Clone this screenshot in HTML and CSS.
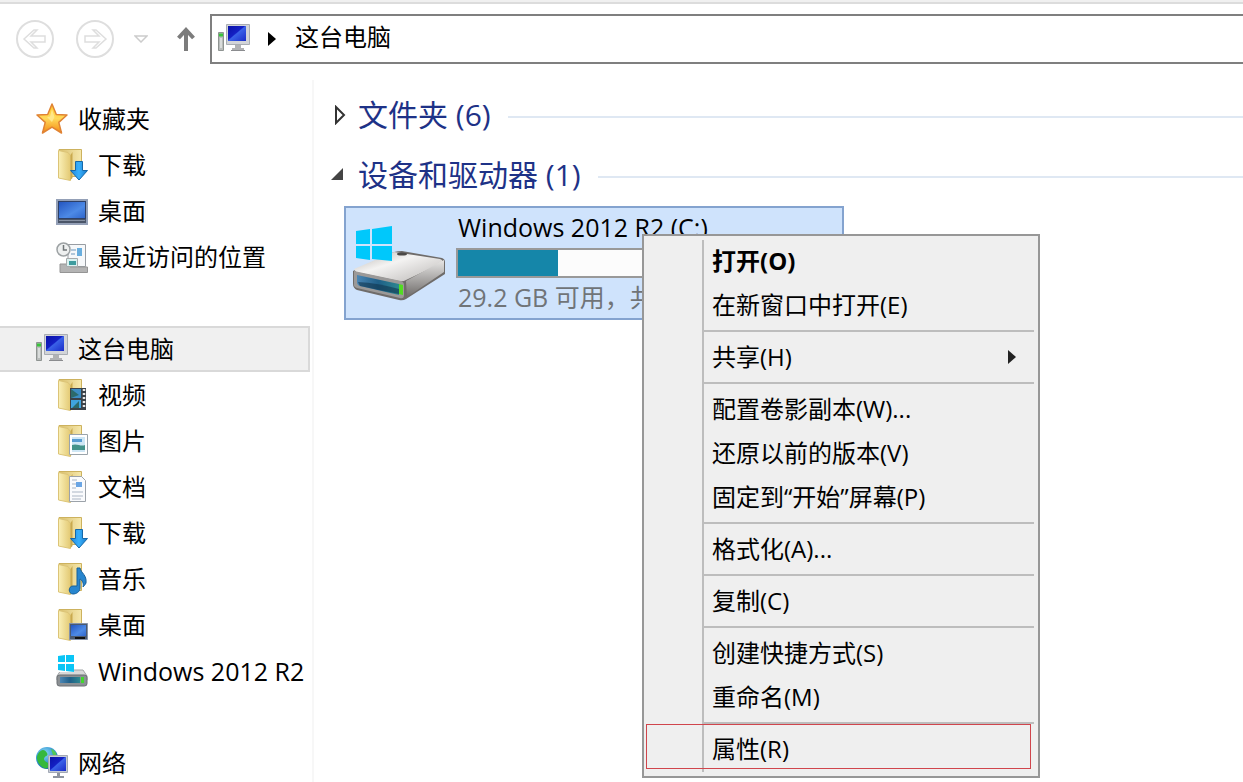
FILE: index.html
```
<!DOCTYPE html>
<html lang="zh-CN">
<head>
<meta charset="utf-8">
<title>这台电脑</title>
<link rel="stylesheet" href="styles.css">
</head>
<body>
<svg class="defs" aria-hidden="true">
  <defs>
    <linearGradient id="gFolder" x1="0" x2="1" y1="0" y2="0"><stop offset="0" stop-color="#faf0b8"/><stop offset="1" stop-color="#e3c973"/></linearGradient>
    <linearGradient id="gBack" x1="0" x2="1"><stop offset="0" stop-color="#d9bf6c"/><stop offset="1" stop-color="#f6e8ac"/></linearGradient>
    <linearGradient id="gScreen" x1="0" x2="1" y1="0" y2="1"><stop offset="0" stop-color="#0a12a8"/><stop offset=".45" stop-color="#1420c4"/><stop offset=".5" stop-color="#3a62e8"/><stop offset="1" stop-color="#1a2cc8"/></linearGradient>
    <linearGradient id="gDesk" x1="0" x2="1" y1="0" y2="1"><stop offset="0" stop-color="#2456c0"/><stop offset=".6" stop-color="#4d8ae6"/><stop offset="1" stop-color="#2f66cc"/></linearGradient>
    <linearGradient id="gStar" x1="0" x2="0" y1="0" y2="1"><stop offset="0" stop-color="#ffc928"/><stop offset=".5" stop-color="#ffd95a"/><stop offset="1" stop-color="#f58a12"/></linearGradient>
    <linearGradient id="gArrow" x1="0" x2="1"><stop offset="0" stop-color="#1d86dd"/><stop offset=".5" stop-color="#39b0fb"/><stop offset="1" stop-color="#1577c9"/></linearGradient>
    <linearGradient id="gTop" x1="0" x2="1" y1="0" y2="1"><stop offset="0" stop-color="#b5b1ae"/><stop offset=".4" stop-color="#f4f3f2"/><stop offset="1" stop-color="#b9b6b4"/></linearGradient>
    <linearGradient id="gSide" x1="0" x2="0" y1="0" y2="1"><stop offset="0" stop-color="#e8e7e6"/><stop offset="1" stop-color="#6e6b69"/></linearGradient>
    <linearGradient id="gFace" x1="0" x2="1"><stop offset="0" stop-color="#4b86b4"/><stop offset=".5" stop-color="#1f5f88"/><stop offset="1" stop-color="#2d8790"/></linearGradient>
    <radialGradient id="gGlobe" cx=".4" cy=".3" r=".8"><stop offset="0" stop-color="#8fdcf4"/><stop offset=".6" stop-color="#2a8ed0"/><stop offset="1" stop-color="#12509c"/></radialGradient>
    <symbol id="folder" viewBox="0 0 32 32">
      <path d="M3 .5h22.500v27H14z" fill="url(#gBack)" stroke="#cdb25e"/>
      <path d="M2.500 1.500L12 3.500l2.500 3v25L2.500 29z" fill="url(#gFolder)" stroke="#dcc477"/>
      <path d="M14.500 6l2-3v26l-2 2z" fill="#c9a94e"/>
    </symbol>
    <symbol id="pc" viewBox="0 0 32 32">
      <path d="M.5 9.500h5v18h-5z" fill="#b9bcbb" stroke="#8f9492"/><path d="M1 10.500h4v3H1z" fill="#39c43a"/><path d="M2 15h2v10H2z" fill="#d9dcdb"/>
      <path d="M8.500 1.500h23v20h-23z" fill="#d2d4d8" stroke="#a9adb3"/>
      <path d="M10 3h18v15H10z" fill="url(#gScreen)"/>
      <path d="M17 22h6v3h3v3H14v-3h3z" fill="#b1b2b4"/><path d="M13 27h14v1H13z" fill="#8b8c8f"/>
    </symbol>
    <symbol id="star" viewBox="0 0 32 32"><path d="M16 1l4.300 10.500L31 12l-8.200 7.400L25.500 30 16 24.200 6.500 30l2.700-10.600L1 12l10.700-.5z" fill="url(#gStar)" stroke="#e08334" stroke-width="1.500" stroke-linejoin="round"/><path d="M16 6l2.500 8L16 19l-5-5 3-.5z" fill="#ffe789"/></symbol>
    <symbol id="dl" viewBox="0 0 32 32"><use href="#folder"/><path d="M19.500 12.500h7v9h5l-8.500 9.500-8.500-9.500h5z" fill="url(#gArrow)" stroke="#1668a8"/></symbol>
    <symbol id="desk" viewBox="0 0 32 32"><path d="M1 5h30v24H1z" fill="#2e4066" stroke="#94a0b7" stroke-width="2"/><path d="M3 7h26v16H3z" fill="url(#gDesk)"/><path d="M2 24h28v4H2z" fill="#4a5568"/><path d="M3 25h26v1H3z" fill="#8691a3"/></symbol>
    <symbol id="recent" viewBox="0 0 32 32">
      <path d="M12 3.500h17.500v22H12z" fill="#f6f8fa" stroke="#989da3"/><path d="M15 8h5v2h-5zM15 12h4v2h-4z" fill="#b1c7da"/><path d="M21 7h5v8h-5z" fill="#69aede"/>
      <path d="M4 23h8l2 3h17.500v5.500H4z" fill="#b4b4b4" stroke="#959595"/><path d="M10.500 17.500h11v8h-11z" fill="#d9f2f1" stroke="#a7aaac"/><path d="M13 20h7v4h-7z" fill="#3e9c9f"/>
      <circle cx="7.500" cy="8.500" r="6.500" fill="#eef0f0" stroke="#9da2a4" stroke-width="1.500"/><path d="M7.500 4v5H11" fill="none" stroke="#717678" stroke-width="1.500"/>
    </symbol>
    <symbol id="video" viewBox="0 0 32 32"><use href="#folder"/><path d="M14 9h16v22H14z" fill="#3b4248"/><path d="M15 10h10v9H15z" fill="#3c8dc4"/><path d="M15 21h10v8H15z" fill="#3fa4df"/><path d="M15 10l8 6-8 3zM16 29l7-7v7z" fill="#2c6a6b"/><path d="M28 10v20" stroke="#e6e6e6" stroke-width="2.500" stroke-dasharray="2 2"/></symbol>
    <symbol id="pic" viewBox="0 0 32 32"><use href="#folder"/><path d="M13.500 9.500h18v20h-18z" fill="#fff" stroke="#9aa4ab"/><path d="M16 12h13v15H16z" fill="#cfe7f5"/><path d="M16 14h10v3H16z" fill="#579cd1"/><path d="M16 20c5-2 9 2 13 0v5H16z" fill="#44938a"/></symbol>
    <symbol id="doc" viewBox="0 0 32 32"><use href="#folder"/><path d="M13.500 5.500h12l4 4v21h-16z" fill="#fafbfd" stroke="#9ca2a9"/><path d="M16 9h5M16 13h4M16 17h4M16 21h11M16 25h11M16 28h9" stroke="#abb6c5"/><path d="M20 11h6v5h-6z" fill="#6aa5e4"/></symbol>
    <symbol id="music" viewBox="0 0 32 32"><use href="#folder"/><path d="M21 5h3c1 5 7 7 6 15-1 2-2 3-3 4 1-4-1-7-3-8v9c0 4-4 6-7 6-5 0-5-8 0-8h4z" fill="#2785ce" stroke="#176099"/></symbol>
    <symbol id="fdesk" viewBox="0 0 32 32"><use href="#folder"/><path d="M13.500 14.500h18v16h-18z" fill="#4b5a70" stroke="#8592a8"/><path d="M15 16h15v11H15z" fill="url(#gDesk)"/><path d="M19 28h10v2H19z" fill="#111"/></symbol>
    <symbol id="drive" viewBox="0 0 32 32"><path d="M5 15h22l4 6v4H1v-4z" fill="#d8d9da" stroke="#a1a4a6"/><rect x="1" y="20" width="30" height="11" rx="2.500" fill="#8b9094" stroke="#6b6f73"/><path d="M4 22h20v6H4z" fill="url(#gFace)"/><path d="M25 22h3v6h-3z" fill="#42d62f"/><path d="M2 0h16v17H2z" fill="#fff"/><path d="M2 1l7-1v7H2zM10 0h8v7h-8zM2 9h7v7l-7-1zM10 9h8v8l-8-1z" fill="#0ac5f6"/></symbol>
    <symbol id="net" viewBox="0 0 32 32"><circle cx="11" cy="11" r="11" fill="url(#gGlobe)"/><path d="M2 7C6 1 9 3 11 6s-3 3-3 6 5 3 5 6-3 4-5 3C3 19-1 12 2 7z" fill="#35b83c"/><path d="M15 2c4 1 6 5 6 8l-4-2z" fill="#54c855"/><path d="M12.500 8.500h19v17h-19z" fill="#c6cbd5" stroke="#a3a9b5"/><path d="M14 10h16v14H14z" fill="url(#gScreen)"/><path d="M21 26h3v3h4v2H17v-2h4z" fill="#8e949f"/></symbol>
  </defs>
</svg>
<header class="toolbar">
  <button class="nav" aria-label="后退"><svg class="round" viewBox="0 0 40 40"><circle cx="20" cy="20" r="18"/><path d="M9 20l10-9h3l-6 6h14v6H16l6 6h-3z"/></svg></button>
  <button class="nav" aria-label="前进"><svg class="round" viewBox="0 0 40 40"><circle cx="20" cy="20" r="18"/><path d="M31 20l-10-9h-3l6 6H10v6h14l-6 6h3z"/></svg></button>
  <button class="nav history" aria-label="最近浏览的位置"><svg class="chev" viewBox="0 0 14 8"><path d="M1 1h12L7 7z"/></svg></button>
  <button class="nav up" aria-label="上移"><svg class="uparrow" viewBox="0 0 18 24"><path d="M9 24V3M1.500 11L9 3l7.500 8"/></svg></button>
  <nav class="address" aria-label="地址">
    <svg class="icon"><use href="#pc"/></svg>
    <svg class="crumb-arrow" viewBox="0 0 8 14"><path d="M0 0l8 7-8 7z"/></svg>
    <a href="#pc-root">这台电脑</a>
  </nav>
</header>
<div class="body">
  <nav class="sidebar" aria-label="导航窗格">
    <ul>
      <li><a class="root" href="#fav"><svg class="icon"><use href="#star"/></svg>收藏夹</a></li>
      <li><a href="#fav-dl"><svg class="icon"><use href="#dl"/></svg>下载</a></li>
      <li><a href="#fav-desk"><svg class="icon"><use href="#desk"/></svg>桌面</a></li>
      <li><a href="#fav-recent"><svg class="icon"><use href="#recent"/></svg>最近访问的位置</a></li>
    </ul>
    <ul>
      <li><a class="root selected" href="#pc-root" aria-current="page"><svg class="icon"><use href="#pc"/></svg>这台电脑</a></li>
      <li><a href="#videos"><svg class="icon"><use href="#video"/></svg>视频</a></li>
      <li><a href="#pictures"><svg class="icon"><use href="#pic"/></svg>图片</a></li>
      <li><a href="#documents"><svg class="icon"><use href="#doc"/></svg>文档</a></li>
      <li><a href="#downloads"><svg class="icon"><use href="#dl"/></svg>下载</a></li>
      <li><a href="#music-dir"><svg class="icon"><use href="#music"/></svg>音乐</a></li>
      <li><a href="#desktop"><svg class="icon"><use href="#fdesk"/></svg>桌面</a></li>
      <li><a class="volume" href="#c"><svg class="icon"><use href="#drive"/></svg>Windows 2012 R2</a></li>
    </ul>
    <ul>
      <li><a class="root" href="#network"><svg class="icon"><use href="#net"/></svg>网络</a></li>
    </ul>
  </nav>
  <main class="content">
    <h2 class="group"><button aria-expanded="false"><svg class="tri" viewBox="0 0 16 20"><path d="M6 2l8 8-8 8z" fill="#fff" stroke="#333" stroke-width="2"/></svg>文件夹 (6)</button></h2>
    <h2 class="group"><button aria-expanded="true"><svg class="tri" viewBox="0 0 16 20"><path d="M1 15h12V3z" fill="#444"/></svg>设备和驱动器 (1)</button></h2>
    <div class="tile">
      <svg class="bigdrive" viewBox="0 0 94 78">
        <path d="M1 47L42 28q4-1 8-1l40 7q3 1 3 4v12L54 75q-3 2-7 1L5 66q-4-2-4-6z" fill="#6f6c6a"/>
        <path d="M2 45L42 28l46 7q4 1 2 4L54 56q-3 2-7 1L4 48z" fill="url(#gTop)"/>
        <path d="M54 57l38-21v12L55 73z" fill="url(#gSide)"/>
        <path d="M2 47l47 10q3 1 3 4v10q0 4-4 3L5 64q-4-1-3-5z" fill="#9b9998"/>
        <path d="M5 51l42 9v11L8 62q-3-1-3-4z" fill="url(#gFace)"/>
        <path d="M6 58q20 1 41 7v5L8 62z" fill="#10364e" opacity=".6"/>
        <path d="M47 60l4 1v10l-4-1z" fill="#52dc22"/>
        <ellipse cx="50" cy="30" rx="5" ry="1.500" fill="#4b4846"/>
        <path d="M4 7l14-2v15H4zM20 5l20-3v18H20zM4 22h14v14L4 34zM20 22h20v15l-20-2z" fill="#00c8fb"/>
      </svg>
      <div class="info">
        <span class="name">Windows 2012 R2 (C:)</span>
        <div class="bar"><div class="used" style="width:27%"></div></div>
        <span class="free">29.2 GB 可用，共</span>
      </div>
      <div class="menu" role="menu">
        <button role="menuitem" class="default">打开(O)</button>
        <button role="menuitem">在新窗口中打开(E)</button>
        <hr>
        <button role="menuitem">共享(H)<svg class="sub" viewBox="0 0 8 14"><path d="M0 0l8 7-8 7z"/></svg></button>
        <hr>
        <button role="menuitem">配置卷影副本(W)...</button>
        <button role="menuitem">还原以前的版本(V)</button>
        <button role="menuitem">固定到“开始”屏幕(P)</button>
        <hr>
        <button role="menuitem">格式化(A)...</button>
        <hr>
        <button role="menuitem">复制(C)</button>
        <hr>
        <button role="menuitem">创建快捷方式(S)</button>
        <button role="menuitem">重命名(M)</button>
        <hr>
        <button role="menuitem" class="marked">属性(R)</button>
      </div>
    </div>
  </main>
</div>
</body>
</html>
```
FILE: styles.css
```
* { box-sizing: border-box; }
body {
  margin: 0;
  height: 100vh;
  overflow: hidden;
  display: flex;
  flex-direction: column;
  background: #fff;
  color: #000;
  font: 24px/46px "Open Sans", "Noto Sans CJK SC", sans-serif;
}
.defs { position: absolute; width: 0; height: 0; }
button { font: inherit; color: inherit; background: none; border: 0; padding: 0; margin: 0; text-align: left; }
a { color: inherit; text-decoration: none; }
ul { list-style: none; margin: 0 0 46px; padding: 0; }
.icon { width: 32px; height: 32px; flex: none; }

.toolbar {
  flex: none;
  display: flex;
  align-items: center;
  height: 80px;
  padding: 10px 0 14px 15px;
  border-top: 2px solid #f0f0f0;
  box-shadow: inset 0 2px #dcdcdc;
}
.nav { display: flex; flex: none; margin-right: 20px; }
.round { width: 40px; height: 40px; fill: none; stroke: #dedede; stroke-width: 2; }
.round path { stroke-width: 1.5; }
.chev { width: 14px; height: 8px; fill: none; stroke: #ccc; stroke-width: 1.5; }
.history { margin: 0 29px 0 -1px; }
.uparrow { width: 18px; height: 24px; fill: none; stroke: #7c7c7c; stroke-width: 4; }
.up { margin-right: 15px; }
.address {
  flex: 1;
  display: flex;
  align-items: center;
  height: 50px;
  padding-left: 6px;
  border: 2px solid #7f7f7f;
  border-right: 0;
}
.address a { padding-bottom: 4px; }
.crumb-arrow { width: 8px; height: 14px; margin: 0 19px 0 18px; }

.body { flex: 1; min-height: 0; display: flex; }
.sidebar { flex: none; width: 314px; padding-top: 16px; border-right: 2px solid #f7f7f7; white-space: nowrap; }
.sidebar a { display: flex; align-items: center; gap: 10px; height: 46px; padding-left: 56px; }
.sidebar a.root { padding-left: 36px; }
.sidebar a.selected { margin-right: 2px; background: #f0f0f0; border: 2px solid #d9d9d9; border-left: 0; }
.sidebar a.volume { font-size: 25px; }

.content { flex: 1; min-width: 0; padding: 6px 0 0 16px; }
.group {
  display: flex;
  align-items: center;
  gap: 17px;
  height: 60px;
  margin: 0;
  color: #1e3287;
  font-size: 30px;
  font-weight: 400;
}
.group::after { content: ""; flex: 1; height: 2px; margin-top: 2px; background: #dfe8f3; }
.group button { display: flex; align-items: center; gap: 12px; padding-bottom: 2px; }
.tri { width: 16px; height: 20px; }
.tile {
  position: relative;
  display: flex;
  gap: 10px;
  width: 500px;
  margin-left: 14px;
  padding: 4px 10px 4px 6px;
  background: #cfe3fc;
  border: 2px solid #84a3cf;
}
.bigdrive { width: 94px; height: 78px; margin-top: 12px; flex: none; }
.info { flex: 1; display: flex; flex-direction: column; font-size: 25px; line-height: 30px; white-space: nowrap; }
.name, .free { padding-left: 2px; }
.bar { height: 30px; margin: 6px 0 4px; background: #fcfcfc; border: 2px solid #999; }
.used { height: 100%; background: #1586a9; }
.free { color: #707478; padding-bottom: 2px; }

.menu {
  position: absolute;
  left: 296px;
  top: 26px;
  width: 398px;
  padding: 4px;
  border: 2px solid #979797;
  background: linear-gradient(#bdbdbd, #bdbdbd) 58px 4px / 2px calc(100% - 8px) no-repeat #efefef;
  line-height: 42px;
}
.menu button { position: relative; display: flex; align-items: center; width: 100%; height: 44px; padding: 0 0 2px 64px; }
.menu .default { font-weight: 700; }
.menu hr { height: 2px; margin: 2px 0 4px 56px; border: 0; background: #bdbdbd; }
.sub { width: 8px; height: 14px; margin: 0 18px 0 auto; fill: #222; }
.marked::after { content: ""; position: absolute; inset: -4px 3px 3px -2px; border: 1px solid #d0454c; }
```
